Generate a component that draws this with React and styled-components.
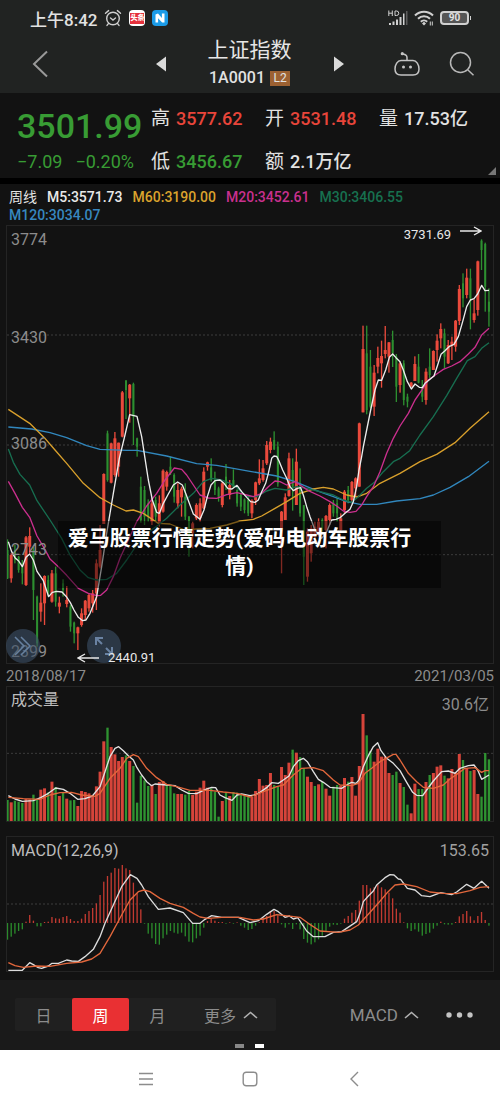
import React, { useState } from "react";
import styled, { createGlobalStyle } from "styled-components";

const GlobalStyle = createGlobalStyle`
  * {
    box-sizing: border-box;
  }
  body {
    margin: 0;
    background: #fff;
    color: #e2e2e2;
    font-family: Roboto, "Noto Sans CJK SC", sans-serif;
  }
  button {
    padding: 0;
    border: 0;
    background: none;
    color: inherit;
    font: inherit;
    cursor: pointer;
  }
  svg {
    display: block;
  }
`;

const RED = "#d6443a";
const GREEN = "#2f9331";

const Page = styled("div")`
  background: #121212;
`;

const StatusBar = styled("div")`
  display: flex;
  align-items: center;
  justify-content: space-between;
  height: 36px;
  padding: 0 31px 0 30px;
  background: #212322;
`;
const StatusGroup = styled("div")`
  display: flex;
  align-items: center;
  gap: ${(p) => p.$gap}px;
`;
const Time = styled("span")`
  font-size: 17px;
  font-weight: 500;
`;
const AppBadge = styled("span")`
  display: flex;
  align-items: center;
  justify-content: center;
  width: 16px;
  height: 16px;
  border-radius: 4px;
  font-size: 7px;
  font-weight: 900;
  line-height: 11px;
  background: ${(p) => p.$bg};
  span {
    background: #e5313c;
    color: #fff;
  }
`;
const Battery = styled("span")`
  position: relative;
  width: 29px;
  height: 14px;
  border: 2px solid #d0d0d0;
  border-radius: 4px;
  background: #555;
  font-size: 10px;
  font-weight: 700;
  line-height: 10px;
  text-align: center;
  &::after {
    content: "";
    position: absolute;
    right: -4px;
    top: 3px;
    width: 1px;
    height: 4px;
    background: #d0d0d0;
  }
`;

const Header = styled("header")`
  display: grid;
  grid-template-columns: 1fr 190px 1fr;
  align-items: center;
  height: 57px;
  padding: 0 25px 4px 24px;
  background: #212322;
`;
const HeaderSide = styled("div")`
  display: flex;
  align-items: center;
  justify-content: ${(p) => p.$justify};
  gap: 28px;
`;
const Switcher = styled("div")`
  display: flex;
  align-items: center;
  justify-content: space-between;
`;
const Title = styled("h1")`
  margin: 0;
  color: #e6e6e6;
  font-size: 21px;
  font-weight: 400;
  line-height: 28px;
`;
const Code = styled("div")`
  display: flex;
  align-items: center;
  justify-content: center;
  gap: 5px;
  font-size: 16px;
  font-weight: 500;
  line-height: 28px;
`;
const Level = styled("span")`
  width: 20px;
  background: #9c6132;
  font-size: 12px;
  font-weight: 400;
  line-height: 15px;
  text-align: center;
`;

const Quote = styled("section")`
  position: relative;
  display: grid;
  grid-template-columns: 134px 114px 114px 1fr;
  grid-template-rows: 42px 43px;
  align-items: center;
  height: 85px;
  padding: 5px 0 0 17px;
  line-height: 24px;
  overflow: hidden;
`;
const Price = styled("strong")`
  padding-top: 14px;
  color: #389c34;
  font-size: 34px;
  font-weight: 500;
  line-height: 32px;
`;
const Change = styled("div")`
  display: flex;
  gap: 13px;
  color: #389c34;
  font-size: 18px;
  white-space: nowrap;
`;
const Stat = styled("div")`
  display: flex;
  gap: 6px;
  font-size: 19px;
  white-space: nowrap;
  b {
    color: ${(p) => p.$color || "#e2e2e2"};
    font-size: 18px;
    font-weight: 500;
  }
`;
const Corner = styled("span")`
  position: absolute;
  right: 4px;
  bottom: 3px;
  border: 4px solid #777;
  border-top-color: transparent;
  border-left-color: transparent;
`;

const Averages = styled("div")`
  display: flex;
  flex-wrap: wrap;
  column-gap: 10px;
  padding: 4px 60px 1px 9px;
  border-top: 6px solid #000;
  font-size: 14px;
  line-height: 18px;
`;
const Average = styled("span")`
  color: ${(p) => p.$color};
  font-weight: 500;
`;

const Panel = styled("section")`
  position: relative;
  margin: 0 6px ${(p) => p.$space || 0}px;
  border: 1px solid #242424;
`;
const Canvas = styled("svg")`
  width: 100%;
  height: ${(p) => p.$height}px;
`;
const Label = styled("span")`
  position: absolute;
  top: ${(p) => p.$top}px;
  ${(p) => (p.$right ? "right: 4px;" : "left: 4px;")}
  color: ${(p) => p.$color || "#8c8c8c"};
  font-size: 16px;
  line-height: 20px;
`;
const Marker = styled("span")`
  position: absolute;
  display: flex;
  align-items: center;
  gap: 9px;
  color: #e8e8e8;
  font-size: 13px;
  line-height: 16px;
`;
const HighMarker = styled(Marker)`
  top: 0;
  right: 11px;
  svg {
    margin-bottom: 8px;
  }
`;
const LowMarker = styled(Marker)`
  bottom: -3px;
  left: 70px;
`;
const RoundButton = styled("button")`
  position: absolute;
  bottom: 0;
  left: ${(p) => p.$left}px;
  display: flex;
  align-items: center;
  justify-content: center;
  width: 34px;
  height: 34px;
  border-radius: 50%;
  background: rgba(60, 80, 103, 0.6);
`;
const Caption = styled("div")`
  position: absolute;
  top: 295px;
  left: 51px;
  right: 52px;
  padding: 3px 22px 8px 2px;
  background: rgba(0, 0, 0, 0.45);
  color: #fff;
  font-size: 21px;
  font-weight: 700;
  line-height: 28px;
  text-align: center;
`;
const Dates = styled("div")`
  display: flex;
  justify-content: space-between;
  padding: 2px 6px 0;
  color: #8c8c8c;
  font-size: 15px;
  line-height: 20px;
`;

const Toolbar = styled("footer")`
  padding: 18px 27px 2px 15px;
  background: #1a1a1a;
  color: #8c8c8c;
  font-size: 16px;
`;
const ToolRow = styled("div")`
  display: flex;
  justify-content: space-between;
`;
const Periods = styled("div")`
  display: flex;
  height: 33px;
  border-radius: 2px;
  background: #202020;
`;
const Period = styled("button")`
  display: flex;
  align-items: center;
  justify-content: center;
  gap: 7px;
  width: ${(p) => (p.$wide ? 90 : 57)}px;
  border-radius: 2px;
  background: ${(p) => (p.$active ? "#e93033" : "transparent")};
  color: ${(p) => (p.$active ? "#fff" : "inherit")};
`;
const Tools = styled("div")`
  display: flex;
  align-items: center;
  gap: 27px;
`;
const Indicator = styled("button")`
  display: flex;
  align-items: center;
  gap: 6px;
  font-size: 17px;
`;
const Pager = styled("div")`
  display: flex;
  justify-content: center;
  gap: 11px;
  padding: 13px 0 0 11px;
`;
const PageDot = styled("span")`
  width: 9px;
  height: 4px;
  background: ${(p) => (p.$active ? "#fff" : "#888")};
`;

const SystemNav = styled("nav")`
  display: flex;
  justify-content: center;
  gap: 60px;
  height: 60px;
  padding-bottom: 3px;
  background: #fff;
`;
const SystemButton = styled("button")`
  display: flex;
  align-items: center;
  justify-content: center;
  width: 44px;
`;

// direction, high, low, body top, body bottom
const candles = [
  ["g", 958, 1077, 990, 1075], ["r", 1000, 1088, 1005, 1075], ["g", 975, 1030, 990, 1020], ["g", 1008, 1058, 1010, 1050],
  ["g", 1020, 1093, 1030, 1060], ["r", 948, 1098, 952, 1095], ["r", 922, 1000, 948, 980], ["g", 980, 1200, 990, 1110],
  ["g", 1127, 1280, 1130, 1270], ["r", 1090, 1205, 1148, 1175], ["r", 1066, 1215, 1068, 1150], ["g", 1066, 1130, 1080, 1120],
  ["r", 1050, 1148, 1060, 1145], ["g", 1040, 1160, 1060, 1145], ["r", 1130, 1180, 1148, 1160], ["g", 1078, 1130, 1090, 1110],
  ["r", 1098, 1162, 1140, 1152], ["g", 1155, 1235, 1160, 1220], ["g", 1205, 1270, 1208, 1240], ["r", 1220, 1290, 1222, 1240],
  ["r", 1165, 1220, 1180, 1215], ["r", 1140, 1200, 1142, 1185], ["r", 1122, 1175, 1125, 1165], ["r", 1110, 1178, 1120, 1150],
  ["r", 1018, 1170, 1030, 1120], ["r", 915, 1045, 990, 1040], ["r", 760, 912, 762, 912], ["g", 632, 785, 640, 780],
  ["r", 668, 790, 670, 788], ["r", 636, 770, 655, 765], ["r", 668, 770, 668, 740], ["r", 513, 652, 517, 650],
  ["g", 480, 597, 482, 510], ["r", 492, 608, 494, 535], ["g", 488, 675, 492, 590], ["g", 653, 710, 655, 680],
  ["g", 770, 908, 800, 900], ["g", 798, 915, 810, 890], ["g", 838, 905, 850, 890], ["r", 835, 915, 850, 905],
  ["g", 830, 905, 840, 890], ["r", 826, 920, 850, 910], ["r", 748, 878, 752, 875], ["r", 752, 812, 756, 800],
  ["g", 710, 765, 740, 760], ["g", 760, 848, 765, 830], ["r", 790, 865, 810, 850], ["r", 800, 890, 806, 832],
  ["g", 790, 900, 830, 890], ["g", 888, 1010, 890, 960], ["r", 905, 985, 910, 940], ["r", 850, 900, 855, 895],
  ["r", 835, 905, 850, 895], ["r", 742, 868, 755, 865], ["r", 725, 752, 727, 740], ["g", 715, 785, 742, 780],
  ["g", 755, 825, 780, 810], ["g", 800, 845, 805, 830], ["r", 785, 862, 790, 855], ["g", 732, 810, 770, 800],
  ["r", 780, 838, 795, 825], ["g", 748, 805, 780, 800], ["g", 808, 860, 810, 850], ["g", 822, 873, 825, 860],
  ["g", 835, 880, 838, 870], ["g", 830, 888, 840, 880], ["r", 838, 895, 842, 880], ["r", 785, 855, 787, 840],
  ["r", 718, 795, 775, 790], ["r", 720, 785, 745, 780], ["r", 663, 735, 675, 730], ["r", 653, 700, 665, 690],
  ["g", 634, 690, 660, 688], ["g", 665, 800, 680, 790], ["r", 873, 1060, 875, 975], ["r", 820, 900, 832, 900],
  ["r", 698, 830, 715, 828], ["g", 715, 872, 750, 800], ["r", 686, 855, 725, 855], ["g", 745, 890, 800, 880],
  ["g", 855, 1095, 856, 1010], ["r", 925, 1085, 935, 1070], ["r", 915, 1025, 925, 1000], ["r", 905, 955, 920, 950],
  ["r", 895, 950, 905, 940], ["g", 895, 935, 900, 925], ["r", 885, 985, 888, 930], ["r", 850, 915, 855, 900],
  ["g", 840, 890, 848, 880], ["g", 835, 905, 850, 880], ["r", 880, 935, 895, 930], ["r", 810, 880, 815, 870],
  ["g", 798, 850, 810, 840], ["r", 783, 850, 786, 840], ["r", 772, 830, 775, 805], ["r", 608, 800, 610, 800],
  ["r", 317, 577, 387, 577], ["g", 317, 583, 400, 570], ["g", 390, 565, 440, 560], ["r", 435, 588, 458, 560],
  ["r", 380, 460, 414, 440], ["r", 362, 503, 408, 430], ["r", 318, 415, 390, 402], ["r", 366, 458, 367, 410],
  ["g", 332, 441, 360, 400], ["g", 402, 546, 410, 500], ["r", 425, 518, 430, 495], ["g", 421, 556, 430, 540],
  ["g", 521, 562, 530, 545], ["r", 486, 500, 488, 500], ["r", 409, 483, 432, 483], ["g", 402, 490, 440, 488],
  ["g", 480, 546, 500, 530], ["r", 445, 554, 455, 540], ["g", 385, 475, 440, 465], ["r", 391, 450, 393, 450],
  ["r", 343, 425, 362, 390], ["r", 310, 385, 327, 355], ["g", 326, 445, 340, 410], ["r", 360, 432, 375, 430],
  ["r", 350, 420, 365, 375], ["r", 300, 395, 302, 380], ["r", 195, 315, 207, 303], ["g", 160, 262, 190, 235],
  ["r", 146, 235, 173, 225], ["g", 146, 328, 175, 235], ["r", 238, 308, 280, 300], ["r", 122, 287, 124, 270],
  ["g", 58, 150, 62, 90], ["g", 68, 275, 72, 200], ["g", 205, 320, 245, 275],
];

// top of every volume bar, the baseline is 408
const volumes = [
  345, 352, 347, 350, 354, 342, 343, 329, 343, 314, 310, 322, 290, 306, 333, 324, 341, 346, 345, 363, 318, 321,
  325, 330, 304, 260, 169, 128, 186, 208, 228, 216, 211, 228, 243, 353, 272, 286, 303, 300, 327, 291, 288, 297,
  303, 325, 327, 327, 329, 318, 330, 320, 308, 287, 308, 310, 320, 395, 348, 324, 333, 321, 323, 330, 330, 335,
  336, 318, 282, 302, 300, 264, 300, 305, 246, 270, 233, 194, 203, 216, 250, 275, 291, 303, 298, 291, 311, 332,
  305, 300, 303, 279, 290, 276, 332, 243, 87, 151, 198, 230, 191, 215, 215, 264, 270, 260, 294, 306, 359, 385,
  296, 312, 312, 291, 270, 264, 245, 241, 272, 280, 252, 262, 207, 225, 250, 258, 255, 327, 335, 204, 223,
];
const volumeColors =
  "grgggrrggrrgrgrgrggrrrrrrrrgrrrrgrgggggrgrrgggrrgg" +
  "rrrrrgggrgrgggggrrrrrrggrrrgrggrrgrgrrggrrgrrrrggr" +
  "rrrrggrggrrggrgrrrgrrrrgrgrrggg";

// end of every histogram bar, zero is at 279
const histogram = [
  329, 320, 311, 303, 298, 275, 255, 272, 289, 289, 276, 275, 261, 265, 266, 261, 258, 267, 273, 273, 266, 252,
  243, 234, 220, 195, 155, 138, 128, 114, 116, 105, 115, 120, 158, 190, 238, 281, 311, 325, 342, 344, 325, 314,
  303, 308, 311, 308, 319, 335, 337, 325, 317, 293, 273, 266, 272, 276, 276, 281, 277, 281, 277, 287, 293, 300,
  297, 287, 277, 262, 258, 243, 243, 256, 283, 293, 283, 297, 283, 298, 327, 338, 343, 337, 328, 317, 305, 290,
  284, 285, 281, 266, 258, 248, 240, 212, 165, 165, 175, 172, 164, 172, 178, 188, 205, 236, 248, 277, 295, 303,
  298, 305, 317, 312, 308, 296, 287, 275, 283, 284, 284, 276, 259, 252, 243, 259, 271, 258, 246, 270, 287,
];

const priceLines = [
  {
    color: "#3187bd",
    points:
      "25,621 95,627 150,638 200,653 260,677 300,688 380,691 411,691 500,708 590,731 650,736 750,754 830,768 885,785 950,812 1000,830 1040,845 1080,853 1130,853 1190,843 1260,836 1300,825 1350,802 1405,770 1467,724",
  },
  {
    color: "#d9a02c",
    points:
      "25,568 89,610 133,653 165,690 200,730 250,790 300,833 340,855 378,873 400,870 430,880 475,910 510,912 555,930 590,927 630,925 680,915 720,903 760,898 785,888 825,865 860,845 900,820 940,807 970,802 1000,807 1040,825 1070,831 1100,820 1140,790 1200,760 1260,725 1310,703 1365,668 1410,625 1467,575",
  },
  {
    color: "#176e50",
    points:
      "25,687 40,727 60,763 89,795 111,842 150,900 185,955 210,1005 240,1050 265,1073 290,1080 320,1078 350,1060 380,1020 410,975 440,940 475,915 500,895 540,855 580,820 610,785 635,775 665,780 690,790 711,803 740,830 770,830 800,813 825,805 860,810 890,800 920,805 960,815 1000,825 1030,840 1055,847 1075,830 1100,805 1125,785 1150,755 1180,725 1200,715 1229,692 1260,645 1300,590 1340,527 1370,475 1402,422 1425,410 1445,385 1467,368",
  },
  {
    color: "#cb2f8e",
    points:
      "25,784 45,820 67,862 89,892 111,948 133,985 150,1017 175,1040 200,1066 235,1105 265,1120 290,1127 302,1126 320,1110 340,1070 360,1015 385,960 410,905 440,858 470,820 495,780 523,744 545,748 560,765 580,795 600,825 625,834 650,835 680,824 711,818 740,825 760,830 785,820 805,800 825,783 840,785 860,795 885,785 900,795 925,812 960,828 990,845 1010,858 1030,873 1050,877 1068,874 1085,855 1100,830 1120,800 1140,755 1160,700 1180,655 1200,618 1225,580 1245,540 1267,508 1285,480 1310,462 1330,448 1355,438 1380,425 1405,402 1425,382 1445,345 1467,325",
  },
  {
    color: "#ececec",
    points:
      "25,965 35,995 45,1013 56,1023 67,1040 78,1012 89,1002 100,1020 111,1054 130,1082 146,1130 157,1117 170,1114 186,1116 200,1131 211,1148 222,1170 235,1192 248,1202 258,1200 270,1180 290,1130 305,1040 320,940 340,820 358,715 375,645 389,584 411,589 425,650 435,715 445,780 457,840 470,877 478,880 490,850 505,822 520,795 533,786 547,795 557,820 568,850 580,882 600,898 612,870 622,830 633,795 645,782 660,780 672,790 684,806 696,807 711,796 725,815 740,832 752,845 765,847 775,840 785,815 797,790 805,760 815,715 822,708 830,709 838,725 848,750 860,775 870,800 880,812 892,805 902,803 910,825 920,860 930,890 945,930 965,955 980,935 995,900 1008,898 1020,893 1035,880 1050,868 1060,845 1070,800 1077,750 1084,715 1090,680 1100,630 1112,570 1125,510 1135,480 1145,481 1157,450 1168,412 1178,402 1188,413 1200,425 1210,450 1222,485 1234,507 1245,492 1258,502 1267,503 1275,490 1290,478 1302,468 1313,435 1323,403 1335,392 1347,380 1362,373 1375,350 1388,305 1400,260 1411,240 1422,236 1433,222 1445,196 1455,212 1467,211",
  },
];
const volumeLines = [
  {
    color: "#e2e2e2",
    points:
      "25,332 45,342 67,349 100,347 122,338 145,325 167,309 190,313 210,325 233,343 255,341 277,333 300,305 315,260 330,215 345,190 356,185 370,197 385,212 400,225 411,248 425,270 440,290 455,302 465,297 500,300 525,302 545,315 565,325 590,326 615,314 635,307 647,308 660,330 675,338 696,346 711,330 725,327 750,332 765,330 780,322 800,308 815,293 835,295 850,285 867,273 880,245 895,227 910,220 922,230 940,260 955,283 970,292 990,307 1025,310 1045,297 1055,292 1068,295 1077,285 1090,245 1105,212 1120,185 1133,173 1143,197 1160,220 1180,235 1200,257 1220,292 1238,322 1250,331 1268,332 1280,315 1300,288 1325,260 1345,258 1365,265 1380,250 1405,242 1422,240 1433,255 1445,283 1467,270",
  },
  {
    color: "#e2673c",
    points:
      "25,337 70,341 120,343 150,330 180,323 215,322 245,330 285,334 300,325 330,280 360,250 380,220 400,209 415,215 440,250 470,278 500,298 530,305 570,316 630,316 670,321 711,325 750,336 790,320 830,305 850,300 880,270 905,250 940,248 970,257 1000,285 1020,300 1055,302 1075,295 1095,265 1115,250 1140,230 1180,208 1188,208 1200,225 1225,265 1250,290 1270,307 1300,310 1330,300 1350,282 1370,268 1395,250 1425,248 1445,262 1455,257 1467,257",
  },
];
const macdLines = [
  {
    color: "#dcdcdc",
    points:
      "25,421 67,421 89,398 100,404 115,413 125,415 145,408 156,400 175,400 200,390 215,393 235,394 255,380 280,358 300,320 315,280 340,225 365,170 391,134 411,145 425,165 445,200 475,238 510,234 550,248 565,265 578,280 600,280 615,268 635,257 665,262 715,262 750,278 775,272 800,253 822,238 835,245 855,262 868,258 880,267 893,263 905,280 920,303 940,320 975,320 1000,307 1025,305 1070,275 1080,250 1090,215 1105,198 1120,183 1130,165 1155,143 1170,134 1182,135 1195,147 1202,148 1222,175 1245,180 1265,197 1290,200 1322,188 1355,194 1370,186 1400,163 1422,175 1445,154 1467,175",
  },
  {
    color: "#e2673c",
    points:
      "25,398 45,407 70,412 110,408 150,409 200,400 245,396 275,387 300,370 330,320 365,255 390,210 415,185 432,180 450,185 480,205 510,220 550,232 580,250 600,261 625,265 665,262 720,262 760,270 790,267 830,254 900,262 925,280 960,303 1015,307 1050,300 1075,285 1100,258 1130,225 1160,190 1185,165 1210,162 1250,170 1290,186 1330,190 1370,191 1410,182 1440,172 1467,170",
  },
];

const averages = [
  { text: "M5:3571.73", color: "#e8e8e8" },
  { text: "M60:3190.00", color: "#dba32d" },
  { text: "M20:3452.61", color: "#c9308e" },
  { text: "M30:3406.55", color: "#17704f" },
  { text: "M120:3034.07", color: "#3787bf" },
];

const barX = (i) => 22.5 + i * 11.11;

const Grid = ({ at }) =>
  at.map((y) => (
    <path key={y} d={`M21 ${y}H1479`} stroke="#3c3c3c" strokeWidth="3" strokeDasharray="6 6" />
  ));

const Lines = ({ data }) =>
  data.map((line, i) => (
    <polyline
      key={i}
      points={line.points}
      fill="none"
      stroke={line.color}
      strokeWidth="4"
      strokeLinejoin="round"
    />
  ));

const PriceChart = () => (
  <Canvas $height={437} viewBox="21 18 1458 1311" preserveAspectRatio="none" aria-hidden="true">
    <Grid at={[345, 675, 1004]} />
    {candles.map(([dir, high, low, top, bottom], i) => {
      const color = dir === "r" ? "#ea4a3c" : "#2d8f30";
      return (
        <g key={i} fill={color}>
          <rect x={barX(i) - 2} y={high} width="4" height={low - high} />
          <rect x={barX(i) - (dir === "r" ? 4.5 : 3)} y={top} width={dir === "r" ? 9 : 6} height={bottom - top} />
        </g>
      );
    })}
    <Lines data={priceLines} />
  </Canvas>
);

const VolumeChart = () => (
  <Canvas $height={134} viewBox="21 6 1458 402" preserveAspectRatio="none" aria-hidden="true">
    <Grid at={[205]} />
    {volumes.map((y, i) => {
      const up = volumeColors[i] === "r";
      return (
        <rect
          key={i}
          x={barX(i) - (up ? 4.5 : 3.5)}
          y={y}
          width={up ? 9 : 7}
          height={408 - y}
          fill={up ? RED : GREEN}
        />
      );
    })}
    <Lines data={volumeLines} />
  </Canvas>
);

const MacdChart = () => (
  <Canvas $height={134} viewBox="21 21 1458 402" preserveAspectRatio="none" aria-hidden="true">
    <Grid at={[222]} />
    {histogram.map((y, i) => (
      <rect
        key={i}
        x={barX(i) - 2}
        y={Math.min(y, 279)}
        width="4"
        height={Math.abs(y - 279)}
        fill={y < 279 ? "#c23a31" : "#2a8a2b"}
      />
    ))}
    <Lines data={macdLines} />
  </Canvas>
);

const AlarmIcon = () => (
  <svg width="18" height="18" viewBox="0 0 18 18" fill="none" stroke="#cfcfcf" strokeWidth="1.4" strokeLinecap="round">
    <circle cx="9" cy="9.5" r="6.3" />
    <path d="M6.5 9l2.5 2 2.5-2M1.5 4.2L4.6 1.6M16.5 4.2l-3.1-2.6M4.4 14.6L3 16.4M13.6 14.6l1.4 1.8" />
  </svg>
);
const NewsIcon = () => (
  <svg width="16" height="16" viewBox="0 0 16 16">
    <rect width="16" height="16" rx="4" fill="#1b9be8" />
    <path d="M3.5 4.5v8h2.6V8.2l4 4.3h2.4v-9H9.9V8L6 3.5z" fill="#fff" />
  </svg>
);
const SignalIcon = () => (
  <svg width="20" height="16" viewBox="0 0 20 16" fill="#d0d0d0">
    <path d="M1 13h2v2H1zM4.5 11.5h2V15h-2zM8 9.5h2V15H8zM11.5 7h2v8h-2zM15 3.5h1.5V15H15z" />
    <path d="M18 1h1.5v14H18z" fill="#5c5c5c" />
    <g fill="none" stroke="#d0d0d0">
      <path d="M.8.5v5.5M4.3.5v5.500M.8 3.200h3.500M7 1v4.500h1.500a2.200 2.200 0 0 0 0-4.500z" />
    </g>
  </svg>
);
const WifiIcon = () => (
  <svg width="20" height="16" viewBox="0 0 20 16" fill="none" stroke="#d0d0d0" strokeWidth="2">
    <path d="M1 5.5a12.5 12.5 0 0 1 18 0M4 8.7a8.5 8.5 0 0 1 12 0M6.8 11.7a4.6 4.6 0 0 1 6.4 0" />
    <path d="M10 11.8l2 1.8-2 2-2-2z" fill="#d0d0d0" stroke="none" />
    <path d="M16.3 11.5v4M18.3 11.5v4" strokeWidth="1" />
  </svg>
);
const BackIcon = () => (
  <svg width="32" height="30" viewBox="0 0 32 30" fill="none" stroke="#999" strokeWidth="2">
    <path d="M23 2.5L10 15l13 12.5" />
  </svg>
);
const Triangle = ({ right }) => (
  <svg width="12" height="16" viewBox="0 0 12 16" fill="#dadada">
    <path d={right ? "M1 0.5v15L11 8z" : "M11 0.5v15L1 8z"} />
  </svg>
);
const RobotIcon = () => (
  <svg width="28" height="26" viewBox="0 0 28 26" fill="none" stroke="#c4c4c4" strokeWidth="1.5">
    <path d="M8 9.5h12c3.5 0 6 4 6 8.5 0 4-2.5 6-6 6H8c-3.5 0-6-2-6-6 0-4.5 2.500-8.500 6-8.500z" />
    <path d="M14 9.5V6.500c0-2-1.500-3-4-3.500" />
    <circle cx="9.3" cy="2.7" r="1.600" fill="#c4c4c4" stroke="none" />
    <circle cx="10.5" cy="16" r="1.500" fill="#c4c4c4" stroke="none" />
    <circle cx="17.5" cy="16" r="1.500" fill="#c4c4c4" stroke="none" />
  </svg>
);
const SearchIcon = () => (
  <svg width="26" height="26" viewBox="0 0 26 26" fill="none" stroke="#b8b8b8" strokeWidth="1.5">
    <circle cx="11.5" cy="11.5" r="10" />
    <path d="M18.7 18.7l5.8 5.5" />
  </svg>
);
const Arrow = ({ left }) => (
  <svg width="22" height="10" viewBox="0 0 22 10" fill="none" stroke="#e8e8e8" strokeWidth="1.4">
    <path d={left ? "M22 5H1M8 1L1 5l7 4" : "M0 5h21M14 1l7 4-7 4"} />
  </svg>
);
const Caret = () => (
  <svg width="15" height="8" viewBox="0 0 15 8" fill="none" stroke="#b0b0b0" strokeWidth="1.6">
    <path d="M1 7l6.5-5.5L14 7" />
  </svg>
);

const App = () => {
  const [period, setPeriod] = useState("周");

  return (
    <Page>
      <GlobalStyle />
      <StatusBar>
        <StatusGroup $gap={7}>
          <Time>上午8:42</Time>
          <AlarmIcon />
          <AppBadge $bg="#fff">
            <span>头条</span>
          </AppBadge>
          <NewsIcon />
        </StatusGroup>
        <StatusGroup $gap={6}>
          <SignalIcon />
          <WifiIcon />
          <Battery>90</Battery>
        </StatusGroup>
      </StatusBar>

      <Header>
        <HeaderSide $justify="flex-start">
          <button aria-label="返回">
            <BackIcon />
          </button>
        </HeaderSide>
        <Switcher>
          <button aria-label="上一个">
            <Triangle />
          </button>
          <div>
            <Title>上证指数</Title>
            <Code>
              1A0001 <Level>L2</Level>
            </Code>
          </div>
          <button aria-label="下一个">
            <Triangle right />
          </button>
        </Switcher>
        <HeaderSide $justify="flex-end">
          <button aria-label="助手">
            <RobotIcon />
          </button>
          <button aria-label="搜索">
            <SearchIcon />
          </button>
        </HeaderSide>
      </Header>

      <Quote>
        <Price>3501.99</Price>
        <Stat $color="#e8453a">
          高<b>3577.62</b>
        </Stat>
        <Stat $color="#e8453a">
          开<b>3531.48</b>
        </Stat>
        <Stat>
          量<b>17.53亿</b>
        </Stat>
        <Change>
          <span>−7.09</span>
          <span>−0.20%</span>
        </Change>
        <Stat $color="#389c34">
          低<b>3456.67</b>
        </Stat>
        <Stat>
          额<b>2.1万亿</b>
        </Stat>
        <Corner />
      </Quote>

      <Averages>
        <span>周线</span>
        {averages.map((item) => (
          <Average key={item.text} $color={item.color}>
            {item.text}
          </Average>
        ))}
      </Averages>

      <Panel>
        <PriceChart />
        <Label $top={4}>3774</Label>
        <Label $top={102}>3430</Label>
        <Label $top={208}>3086</Label>
        <Label $top={314}>2743</Label>
        <Label $top={416}>2399</Label>
        <HighMarker>
          3731.69 <Arrow />
        </HighMarker>
        <RoundButton $left={-1} aria-label="展开">
          <svg width="20" height="20" viewBox="0 0 20 20" fill="none" stroke="#66809f" strokeWidth="1.5">
            <path d="M2 1l9 9-9 9M8 1l9 9-9 9" />
          </svg>
        </RoundButton>
        <RoundButton $left={80} aria-label="全屏">
          <svg width="20" height="20" viewBox="0 0 20 20" fill="none" stroke="#6a82a2" strokeWidth="2">
            <path d="M2 9V2h7M2 2l6 6M18 11v7h-7M18 18l-6-6" />
          </svg>
        </RoundButton>
        <LowMarker>
          <Arrow left /> 2440.91
        </LowMarker>
        <Caption>爱马股票行情走势(爱码电动车股票行情)</Caption>
      </Panel>
      <Dates>
        <span>2018/08/17</span>
        <span>2021/03/05</span>
      </Dates>

      <Panel $space={14}>
        <VolumeChart />
        <Label $top={3} $color="#bdbdbd">
          成交量
        </Label>
        <Label $top={8} $right>
          30.6亿
        </Label>
      </Panel>

      <Panel $space={8}>
        <MacdChart />
        <Label $top={4} $color="#bdbdbd">
          MACD(12,26,9)
        </Label>
        <Label $top={4} $right $color="#a0a0a0">
          153.65
        </Label>
      </Panel>

      <Toolbar>
        <ToolRow>
          <Periods>
            {["日", "周", "月"].map((name) => (
              <Period key={name} $active={period === name} onClick={() => setPeriod(name)}>
                {name}
              </Period>
            ))}
            <Period $wide>
              更多 <Caret />
            </Period>
          </Periods>
          <Tools>
            <Indicator>
              MACD <Caret />
            </Indicator>
            <button aria-label="更多设置">
              <svg width="27" height="6" viewBox="0 0 27 6" fill="#c4c4c4">
                <circle cx="3" cy="3" r="2.7" />
                <circle cx="13.5" cy="3" r="2.7" />
                <circle cx="24" cy="3" r="2.7" />
              </svg>
            </button>
          </Tools>
        </ToolRow>
        <Pager>
          <PageDot />
          <PageDot $active />
        </Pager>
      </Toolbar>

      <SystemNav>
        <SystemButton aria-label="菜单">
          <svg width="14" height="14" viewBox="0 0 14 14" stroke="#8c8c8c" strokeWidth="1.3">
            <path d="M0 1.5h14M0 7h14M0 12.5h14" />
          </svg>
        </SystemButton>
        <SystemButton aria-label="主页">
          <svg width="16" height="16" viewBox="0 0 16 16" fill="none" stroke="#8c8c8c" strokeWidth="1.4">
            <rect x="1.2" y="1.2" width="13.6" height="13.6" rx="3" />
          </svg>
        </SystemButton>
        <SystemButton aria-label="后退">
          <svg width="10" height="16" viewBox="0 0 10 16" fill="none" stroke="#8c8c8c" strokeWidth="1.4">
            <path d="M9 1L2 8l7 7" />
          </svg>
        </SystemButton>
      </SystemNav>
    </Page>
  );
};

export default App;
